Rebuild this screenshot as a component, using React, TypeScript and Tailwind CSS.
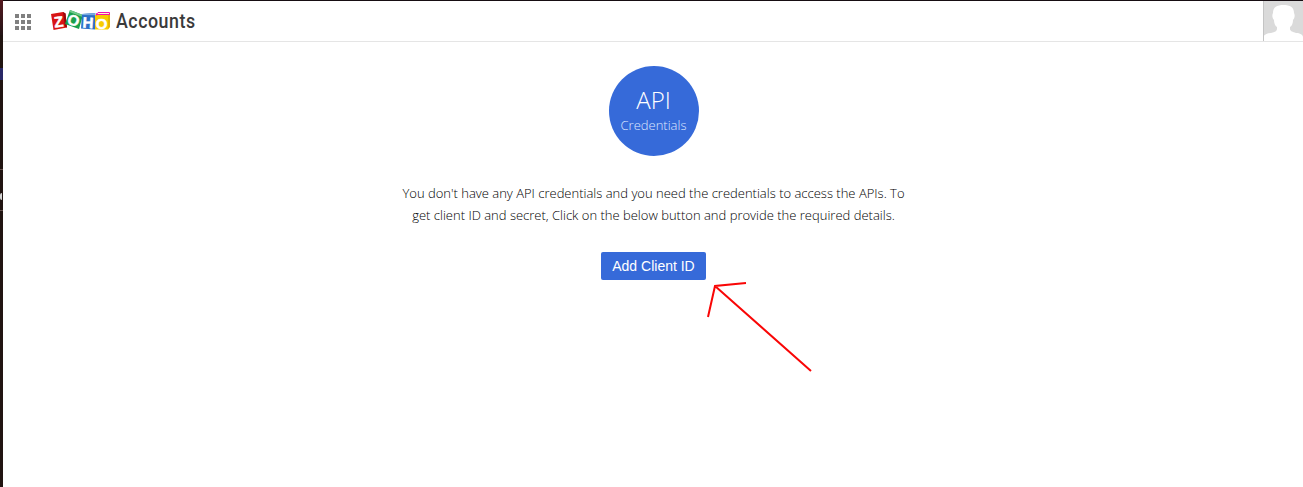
function AppsGrid() {
  return (
    <div className="grid grid-cols-3 gap-[2px]">
      {Array.from({ length: 9 }, (_, i) => (
        <span key={i} className="size-1 bg-[#808080]" />
      ))}
    </div>
  );
}

function ZohoLogo() {
  return (
    <svg width="60" height="22" viewBox="0 0 60 22" fontFamily="Liberation Sans, sans-serif" fontWeight="700" fill="#fff" stroke="#fff" strokeWidth=".5" textAnchor="middle">
      <g stroke="none">
        <path d="M0 4 12 2l2.500 1.500 1.500 14L2.500 20z" fill="#d81515" />
        <path d="m12 2 2.500 1.500 1.500 14-2-.8z" fill="#97080c" />
        <path d="m19 0 13 5-4 14-14-5z" fill="#18a04c" />
        <path d="m19 0 13 5-.5 2L18.500 2z" fill="#70c989" />
        <path d="m31 4 13-1 1 2-1 14.500-14-1z" fill="#2c6fc6" />
        <path d="m31 4 13-1 .8 2.200L31 5z" fill="#79a9df" />
        <path d="M44 5h13v14.500H44z" fill="#f8cc00" />
        <path d="m57 5 2-2v14l-2 2.500z" fill="#e8b400" />
        <path d="m44 5 2-2h13l-2 2z" fill="#fff6ca" />
      </g>
      <text x="7.700" y="17" fontSize="15" transform="rotate(-7 7 11)">Z</text>
      <text x="22.500" y="15.500" fontSize="15" transform="rotate(20 22.500 10)">O</text>
      <text x="37.200" y="18" fontSize="15" transform="rotate(4 37 12)">H</text>
      <path d="M45.500 5.500V3.500h1l.5-1h11.500v2H46" fill="none" stroke="#f010b0" strokeWidth="1" />
      <text x="50.700" y="18.500" fontSize="15">O</text>
    </svg>
  );
}

function Avatar() {
  return (
    <svg className="block" width="40" height="40" viewBox="0 0 40 40">
      <path d="M0 0h40v40H0z" fill="#dadada" />
      <path d="M0 40v-4c1-2 4-4 8-4 4-1 6-2 6-4v-2c-2-1-3-4-3-7-2-2-2-5-1-7C10 6 14 4 20.500 4S31 6 31 12c1 2 1 5-1 7 0 3-1 6-3 7v2c0 2 3 3 6 4 4 0 7 2 7 4v4z" fill="#fff" />
      <path d="M.5 0v40" stroke="#c4c4c4" />
    </svg>
  );
}

export default function App() {
  return (
    <div className="relative flex h-[487px] w-full overflow-hidden bg-white font-['Open_Sans',sans-serif]">
      <div className="flex w-[3px] shrink-0 flex-col bg-[#211411]">
        <div className="h-[35px] bg-linear-to-b from-[#551820] to-[#241416]" />
        <div className="mt-[33px] h-3 bg-[#292866]" />
        <div className="mt-[89px] h-px bg-[#64504d]" />
        <div className="mt-[23px] h-[7px] w-[2px] rounded-l-sm bg-[#d5d5d5]" />
        <div className="mt-[10px] h-px bg-[#64504d]" />
      </div>
      <div className="flex min-w-0 grow flex-col border-t border-[#160d12]">
        <header className="flex h-[41px] shrink-0 items-start border-b border-[#e5e5e5] pl-3">
          <div className="pt-[13px]"><AppsGrid /></div>
          <div className="ml-5 pt-[9px]"><ZohoLogo /></div>
          <h1 className="ml-[5px] origin-left scale-x-[0.89] pt-[6px] font-[Roboto,sans-serif] text-[20px] leading-7 font-medium tracking-[0.6px] text-[#3a3a3a]">Accounts</h1>
          <div className="ml-auto"><Avatar /></div>
        </header>
        <main className="flex flex-col items-center pt-6 pl-px">
          <div className="ml-px flex size-[90px] flex-col items-center rounded-full bg-[#366ad9] pt-[19px] pr-px font-light text-white">
            <span className="text-[24px] leading-[30px]">API</span>
            <span className="text-[13px] leading-5 text-[#dfe8ff]">Credentials</span>
          </div>
          <p className="mt-[26px] w-[520px] text-center text-[13px] leading-[22px] font-light text-black">
            You don't have any API credentials and you need the credentials to access the APIs. To<br />
            get client ID and secret, Click on the below button and provide the required details.
          </p>
          <button className="mt-[26px] mr-px h-7 w-[105px] rounded-[2px] bg-[#366ad9] pl-px font-['Liberation_Sans',sans-serif] text-[14px] text-white">Add Client ID</button>
        </main>
      </div>
      <svg className="absolute top-[278px] left-[702px]" width="116" height="100" viewBox="702 278 116 100" fill="none" stroke="#f90606" strokeWidth="2">
        <path d="m708 317 7-31 31-3M715 286l96 85" />
      </svg>
    </div>
  );
}
